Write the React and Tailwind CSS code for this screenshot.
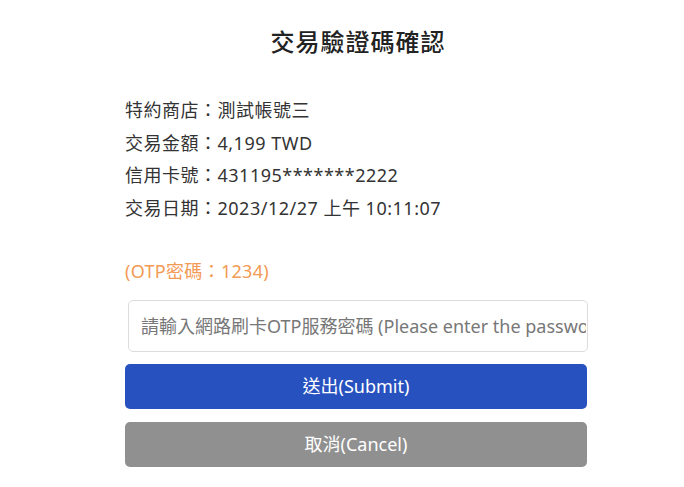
export default function App() {
  const font = { fontFamily: '"Noto Sans", "Noto Sans CJK TC", sans-serif' };
  return (
    <div className="w-[684px] h-[487px] bg-white text-[#333]" style={font}>
      <div className="ml-[125px] w-[462px] flex flex-col">
        <h1 className="mt-[26px] text-center text-[24px] leading-[32px] font-medium tracking-[1px] text-[#222] pl-[4px]">
          交易驗證碼確認
        </h1>
        <div className="mt-[36px] text-[18px] leading-[32.5px] tracking-[0.5px] text-[#333]">
          <div>特約商店：測試帳號三</div>
          <div>交易金額：4,199 TWD</div>
          <div>信用卡號：431195*******2222</div>
          <div>交易日期：2023/12/27 上午 10:11:07</div>
        </div>
        <div className="mt-[31px] text-[18px] leading-[32px] tracking-[0.3px] text-[#f39a55]">
          (OTP密碼：1234)
        </div>
        <input
          className="mt-[13px] ml-[3px] w-[460px] h-[52px] border border-[#dcdcdc] rounded-[5px] pl-[12px] pr-[1px] text-[18px] text-[#333] placeholder:text-[#777] outline-none"
          style={font}
          placeholder="請輸入網路刷卡OTP服務密碼 (Please enter the password)"
        />
        <button
          className="mt-[12px] h-[45px] w-full rounded-[5px] bg-[#2851c0] text-white text-[18px]"
          style={font}
        >
          送出(Submit)
        </button>
        <button
          className="mt-[13px] h-[45px] w-full rounded-[5px] bg-[#909090] text-white text-[18px]"
          style={font}
        >
          取消(Cancel)
        </button>
      </div>
    </div>
  );
}
